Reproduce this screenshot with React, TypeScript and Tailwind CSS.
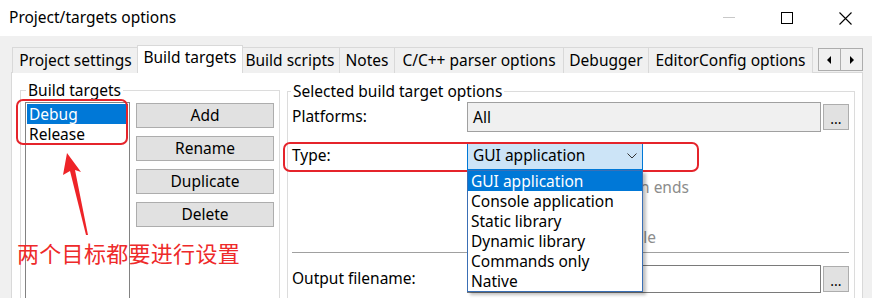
import React from 'react';

const tabs = [
  { label: 'Project settings', w: 'w-[127px]' },
  { label: 'Build targets', w: 'w-[106px]', active: true },
  { label: 'Build scripts', w: 'w-[100px]' },
  { label: 'Notes', w: 'w-[56px]' },
  { label: 'C/C++ parser options', w: 'w-[170px]' },
  { label: 'Debugger', w: 'w-[86px]' },
  { label: 'EditorConfig options', w: 'w-[165px]' },
];

const typeOptions = ['GUI application', 'Console application', 'Static library', 'Dynamic library', 'Commands only', 'Native'];

function DotsButton() {
  return (
    <div className="w-[26px] h-[26px] ml-[2px] border border-[#adadad] bg-[#e1e1e1] flex items-end justify-center pb-[3px] text-[14px] leading-none">
      ...
    </div>
  );
}

export default function App() {
  return (
    <div className="relative w-[872px] h-[298px] overflow-hidden bg-[#f0f0f0] text-black text-[15.5px] font-['Noto_Sans',sans-serif]">
      {/* title bar */}
      <div className="h-[36px] bg-white flex items-center">
        <div className="flex-1 pl-[9px] text-[15.5px] leading-none pb-[1px]">Project/targets options</div>
        <div className="flex h-full -mr-[2px]">
          <div className="w-[58px] flex items-center justify-center">
            <svg width="12" height="12" viewBox="0 0 12 12"><path d="M0 5.5H12" stroke="#c8c8c8" strokeWidth="1" /></svg>
          </div>
          <div className="w-[58px] flex items-center justify-center">
            <svg width="12" height="12" viewBox="0 0 12 12"><rect x="0.5" y="0.5" width="11" height="11" fill="none" stroke="#000" strokeWidth="1" /></svg>
          </div>
          <div className="w-[58px] flex items-center justify-center">
            <svg width="13" height="13" viewBox="0 0 13 13"><path d="M0.5 0.5L12.5 12.5M12.5 0.5L0.5 12.5" stroke="#000" strokeWidth="1.1" /></svg>
          </div>
        </div>
      </div>

      <div className="pl-[11px]">
        {/* tab strip */}
        <div className="h-[37px] flex items-end pl-[1px] -mb-px relative z-10">
          {tabs.map((t) =>
            t.active ? (
              <div key={t.label} className={`${t.w} h-[28px] -mx-[2px] relative z-10 bg-white border border-b-0 border-[#d9d9d9] flex items-center justify-center pb-[3px] leading-none whitespace-nowrap`}>
                {t.label}
              </div>
            ) : (
              <div key={t.label} className={`${t.w} h-[26px] -ml-px first:ml-0 bg-[#f0f0f0] border border-b-0 border-[#d9d9d9] flex items-center justify-center leading-none overflow-hidden whitespace-nowrap`}>
                {t.label}
              </div>
            )
          )}
          <div className="flex self-start mt-[12px] ml-auto mr-[9px]">
            <div className="w-[23px] h-[23px] border border-[#adadad] bg-[#f0f0f0] flex items-center justify-center">
              <svg width="5" height="8" viewBox="0 0 5 8"><path d="M4 0V8L0 4Z" fill="#000" /></svg>
            </div>
            <div className="w-[23px] h-[23px] -ml-px border border-[#adadad] bg-[#f0f0f0] flex items-center justify-center">
              <svg width="5" height="8" viewBox="0 0 5 8"><path d="M1 0V8L5 4Z" fill="#000" /></svg>
            </div>
          </div>
        </div>

        {/* panel */}
        <div className="w-[852px] h-[240px] bg-white border border-[#d9d9d9] flex items-start gap-[7px] pl-[8px] pt-[7px]">
          {/* group: build targets */}
          <fieldset className="w-[260px] h-[240px] border border-[#dcdcdc]">
            <legend className="ml-[5px] px-[2px] leading-[20px]">Build targets</legend>
            <div className="flex pl-[4px] mt-[2px]">
              <div className="w-[105px] h-[220px] border border-[#828282] p-[1px]">
                <div className="h-[20px] bg-[#0078d7] text-white pl-[2px] leading-[20px]">Debug</div>
                <div className="h-[20px] pl-[2px] leading-[20px]">Release</div>
              </div>
              <div className="ml-[6px] mt-[1px] w-[138px] flex flex-col gap-[8px]">
                {['Add', 'Rename', 'Duplicate', 'Delete'].map((b) => (
                  <div key={b} className="h-[25px] border border-[#adadad] bg-[#e1e1e1] flex items-center justify-center leading-none">
                    {b}
                  </div>
                ))}
              </div>
            </div>
          </fieldset>

          {/* group: selected build target options */}
          <fieldset className="w-[568px] h-[240px] mt-[1px] border border-[#dcdcdc]">
            <legend className="ml-[3px] px-[2px] leading-[20px]">Selected build target options</legend>
            <div className="pl-[4px] pr-[5px]">
              <div className="flex items-center h-[30px] mt-[1px]">
                <div className="w-[175px]">Platforms:</div>
                <div className="w-[354px] h-[30px] border border-[#a0a0a0] bg-[#f0f0f0] pl-[5px] pt-[3px]">All</div>
                <DotsButton />
              </div>

              <div className="flex items-center h-[28px] mt-[10px]">
                <div className="w-[175px]">Type:</div>
                <div className="relative">
                  <div className="w-[176px] h-[28px] border border-[#0078d7] bg-[#cce4f7] flex items-center pl-[5px] pr-[5px]">
                    <span className="flex-1">GUI application</span>
                    <svg width="10" height="6" viewBox="0 0 10 6"><path d="M0.5 0.5L5 5L9.5 0.5" fill="none" stroke="#333" strokeWidth="1" /></svg>
                  </div>
                  {/* open dropdown */}
                  <div className="absolute left-0 top-full z-20 w-[176px] border border-[#3a6fb5] bg-white shadow-[3px_3px_3px_rgba(0,0,0,0.25)]">
                    {typeOptions.map((o, i) => (
                      <div key={o} className={`h-[20px] leading-[20px] pl-[3px] whitespace-nowrap ${i === 0 ? 'bg-[#0078d7] text-white' : ''}`}>
                        {o}
                      </div>
                    ))}
                  </div>
                </div>
              </div>

              <div className="pl-[195px] text-[#8c8c8c] mt-[5px]">
                <div className="h-[25px] leading-[25px]">Pause when execution ends</div>
                <div className="h-[25px] leading-[25px]">Create import library</div>
                <div className="h-[25px] leading-[25px]">Create .DEF exports file</div>
              </div>

              <div className="h-px bg-[#a0a0a0] mt-[2px]" />

              <div className="flex items-center h-[28px] mt-[12px]">
                <div className="w-[175px]">Output filename:</div>
                <div className="w-[354px] h-[28px] border border-[#7a7a7a] bg-white pl-[5px] leading-[26px]">bin\Debug\MyProjecte</div>
                <DotsButton />
              </div>
            </div>
          </fieldset>
        </div>
      </div>

      {/* annotations */}
      <div className="absolute left-[16px] top-[99px] w-[112px] h-[46px] rounded-[7px] border-2 border-[#e5242b]" />
      <div className="absolute left-[283px] top-[142px] w-[416px] h-[30px] rounded-[7px] border-2 border-[#e5242b] z-10" />
      <svg className="absolute left-0 top-0" width="872" height="298" viewBox="0 0 872 298">
        <path d="M67 153 L81 172 L75 170 L88 235 L86 235 L70 171 L63 175 Z" fill="#ee2428" />
      </svg>
      <div className="absolute left-[17px] top-[241px] text-[22px] leading-none tracking-[0.3px] text-[#ee2a2a] font-['Noto_Sans_CJK_SC',sans-serif]">
        两个目标都要进行设置
      </div>
    </div>
  );
}
